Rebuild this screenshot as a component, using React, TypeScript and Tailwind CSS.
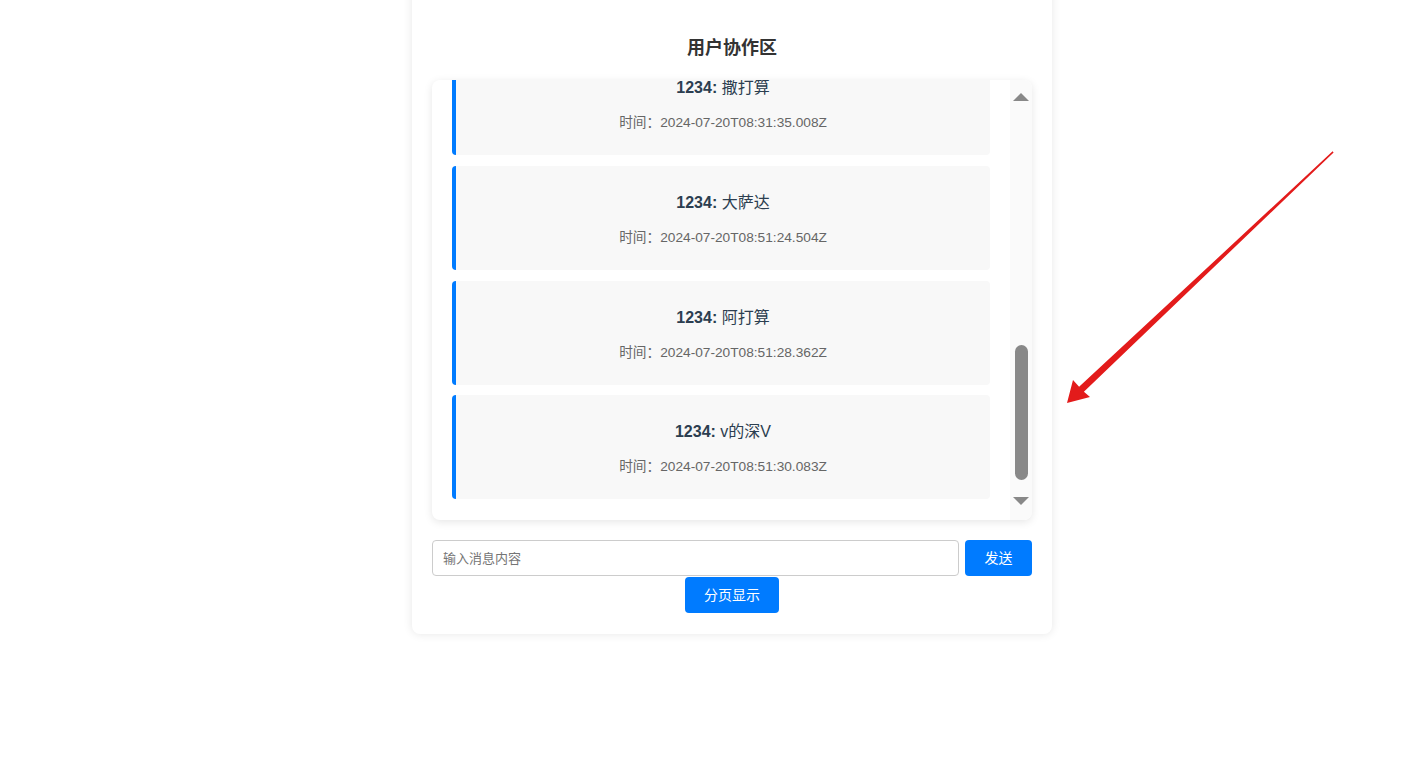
import React, { useEffect, useRef, useState } from 'react';

interface Message {
  id: number;
  user: string;
  content: string;
  time: string;
}

const initialMessages: Message[] = [
  { id: 1, user: '1234', content: '你好', time: '2024-07-20T08:20:11.512Z' },
  { id: 2, user: '1234', content: '测试一下', time: '2024-07-20T08:22:45.130Z' },
  { id: 3, user: '1234', content: '123', time: '2024-07-20T08:25:02.771Z' },
  { id: 4, user: '1234', content: '大家好', time: '2024-07-20T08:28:19.246Z' },
  { id: 5, user: '1234', content: '撒打算', time: '2024-07-20T08:31:35.008Z' },
  { id: 6, user: '1234', content: '大萨达', time: '2024-07-20T08:51:24.504Z' },
  { id: 7, user: '1234', content: '阿打算', time: '2024-07-20T08:51:28.362Z' },
  { id: 8, user: '1234', content: 'v的深V', time: '2024-07-20T08:51:30.083Z' },
];

const MessageItem: React.FC<{ message: Message }> = ({ message }) => (
  <div className="flex flex-col items-center rounded-[4px] border-l-4 border-[#007bff] bg-[#f8f8f8] pt-[26px] pb-[23px] text-center">
    <p className="text-base leading-[22px] text-[#2c3e50]">
      <span className="font-bold">{message.user}:</span> {message.content}
    </p>
    <p className="mt-[15px] text-[13.7px] leading-[18px] text-[#666]">时间：{message.time}</p>
  </div>
);

// drawn scrollbar, the native one is hidden
const ScrollRail: React.FC = () => (
  <div className="flex w-[22px] shrink-0 flex-col items-center bg-[#fafafa] pt-[13px] pb-[15px]">
    <svg width="16" height="8" viewBox="0 0 16 8">
      <polygon points="8,0 16,8 0,8" fill="#888" />
    </svg>
    <div className="flex-1" />
    <div className="h-[135px] w-[13px] rounded-full bg-[#888]" />
    <svg className="mt-[17px]" width="16" height="8" viewBox="0 0 16 8">
      <polygon points="0,0 16,0 8,8" fill="#888" />
    </svg>
  </div>
);

const App: React.FC = () => {
  const [messages] = useState<Message[]>(initialMessages);
  const [input, setInput] = useState('');
  const listRef = useRef<HTMLDivElement>(null);

  useEffect(() => {
    // keep the newest message in view
    if (listRef.current) listRef.current.scrollTop = listRef.current.scrollHeight;
  }, [messages]);

  return (
    <div className="relative h-[771px] w-full overflow-hidden bg-white font-['Liberation_Sans','Noto_Sans_CJK_SC',sans-serif]">
      <div className="-mt-4 ml-[412px] flex w-[640px] flex-col rounded-lg bg-white px-5 pt-[52px] pb-[21px] shadow-[0_0_10px_rgba(0,0,0,0.1)]">
        <h2 className="text-center text-lg leading-6 font-bold text-[#333]">用户协作区</h2>

        <div className="mt-5 flex h-[440px] overflow-hidden rounded-lg bg-white shadow-[0_2px_8px_rgba(0,0,0,0.1)]">
          <div ref={listRef} className="flex-1 overflow-y-auto [scrollbar-width:none]">
            <div className="flex flex-col gap-[10.6px] px-5 pt-5 pb-[21px]">
              {messages.map((m) => (
                <MessageItem key={m.id} message={m} />
              ))}
            </div>
          </div>
          <ScrollRail />
        </div>

        <div className="mt-5 flex gap-[6px]">
          <input
            value={input}
            onChange={(e) => setInput(e.target.value)}
            placeholder="输入消息内容"
            className="h-9 flex-1 rounded-[4px] border border-[#ccc] px-[10px] text-[13px] text-[#333] outline-none placeholder:text-[#757575]"
          />
          <button className="h-9 w-[67px] rounded-[4px] bg-[#007bff] text-sm text-white">发送</button>
        </div>
        <button className="mx-auto mt-px h-9 w-[94px] rounded-[4px] bg-[#007bff] text-sm text-white">分页显示</button>
      </div>

      <svg className="pointer-events-none absolute inset-0" width="1414" height="771" viewBox="0 0 1414 771">
        <polygon
          points="1067,403 1073,380 1079.1,386.8 1332.6,151.3 1333.6,152.4 1083.9,391.8 1090,397"
          fill="#e31b1b"
        />
      </svg>
    </div>
  );
};

export default App;
